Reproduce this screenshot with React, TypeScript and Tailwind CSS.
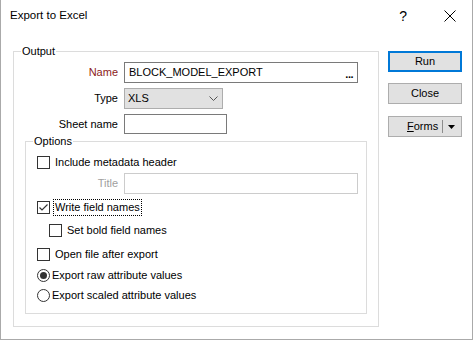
import React from "react";

function CheckBox({ checked = false }: { checked?: boolean }) {
  return (
    <span className="w-[13px] h-[13px] border border-[#333333] bg-white flex items-center justify-center shrink-0">
      {checked && (
        <svg width="11" height="11" viewBox="0 0 11 11">
          <path d="M1.5 5.5 L4 8 L9.5 2.5" fill="none" stroke="#333333" strokeWidth="1.2" />
        </svg>
      )}
    </span>
  );
}

function Radio({ checked = false }: { checked?: boolean }) {
  return (
    <span className="w-[13px] h-[13px] rounded-full border border-[#333333] bg-white flex items-center justify-center shrink-0">
      {checked && <span className="w-[7px] h-[7px] rounded-full bg-[#333333]" />}
    </span>
  );
}

export default function App() {
  return (
    <div className="w-[473px] h-[340px] bg-white border-x border-b border-[#aaaaaa] font-['Liberation_Sans',Arial,sans-serif] text-[11px] leading-[15px] text-black flex flex-col">
      {/* Title bar */}
      <div className="h-[31px] flex items-center pl-[9px] shrink-0">
        <span className="text-[11.5px]">Export to Excel</span>
        <span className="ml-auto mr-[37px] text-[14px] leading-none">?</span>
        <svg width="12" height="12" viewBox="0 0 12 12" className="mr-[16px]">
          <path d="M0.5 0.5 L11.5 11.5 M11.5 0.5 L0.5 11.5" stroke="#000" strokeWidth="1" />
        </svg>
      </div>

      {/* Body */}
      <div className="flex pt-[20px] pl-[12px]">
        {/* Output group */}
        <div className="relative w-[366px] h-[276px] border border-[#dcdcdc] pt-[10px] flex flex-col">
          <span className="absolute left-[7px] top-[-8px] bg-white px-[1px]">Output</span>

          <div className="flex items-center h-[21px]">
            <span className="w-[104px] text-right text-[#8b1a1a]">Name</span>
            <div className="ml-[6px] w-[234px] h-[21px] border border-[#7a7a7a] flex items-center pl-[4px] pr-[4px]">
              <span>BLOCK_MODEL_EXPORT</span>
              <span className="ml-auto font-bold tracking-[-0.5px] leading-[10px] self-end mb-[3px]">...</span>
            </div>
          </div>

          <div className="flex items-center h-[21px] mt-[5px]">
            <span className="w-[104px] text-right">Type</span>
            <div className="ml-[6px] w-[99px] h-[21px] border border-[#adadad] bg-[#e1e1e1] flex items-center pl-[3px] pr-[4px]">
              <span>XLS</span>
              <svg width="9" height="6" viewBox="0 0 9 6" className="ml-auto">
                <path d="M0.5 0.5 L4.5 4.5 L8.5 0.5" fill="none" stroke="#555" strokeWidth="1" />
              </svg>
            </div>
          </div>

          <div className="flex items-center h-[20px] mt-[5px]">
            <span className="w-[104px] text-right">Sheet name</span>
            <div className="ml-[6px] w-[103px] h-[20px] border border-[#7a7a7a] bg-white" />
          </div>

          {/* Options group */}
          <div className="relative ml-[11px] mt-[7px] w-[342px] h-[173px] border border-[#dcdcdc] pl-[11px] pt-[11px] flex flex-col">
            <span className="absolute left-[7px] top-[-8px] bg-white px-[1px]">Options</span>

            <div className="flex items-center h-[18px]">
              <CheckBox />
              <span className="ml-[5px]">Include metadata header</span>
            </div>

            <div className="flex items-center h-[21px] mt-[2px]">
              <span className="w-[81px] text-right text-[#a0a0a0]">Title</span>
              <div className="ml-[6px] w-[234px] h-[21px] border border-[#cccccc] bg-white" />
            </div>

            <div className="flex items-center h-[18px] mt-[4px]">
              <CheckBox checked />
              <span className="ml-[3px] px-[1px] border border-dotted border-black leading-[15px]">Write field names</span>
            </div>

            <div className="flex items-center h-[18px] mt-[5px] ml-[12px]">
              <CheckBox />
              <span className="ml-[5px]">Set bold field names</span>
            </div>

            <div className="flex items-center h-[18px] mt-[6px]">
              <CheckBox />
              <span className="ml-[5px]">Open file after export</span>
            </div>

            <div className="flex items-center h-[18px] mt-[3px]">
              <Radio checked />
              <span className="ml-[2px]">Export raw attribute values</span>
            </div>

            <div className="flex items-center h-[18px] mt-[2px]">
              <Radio />
              <span className="ml-[2px]">Export scaled attribute values</span>
            </div>
          </div>
        </div>

        {/* Buttons */}
        <div className="ml-[9px] w-[74px] flex flex-col">
          <div className="h-[21px] border-2 border-[#0078d7] bg-[#e1e1e1] flex items-center justify-center">Run</div>
          <div className="h-[21px] mt-[11px] border border-[#adadad] bg-[#e1e1e1] flex items-center justify-center">Close</div>
          <div className="h-[21px] mt-[12px] border border-[#adadad] bg-[#e1e1e1] flex items-center">
            <span className="ml-[18px]"><span className="underline">F</span>orms</span>
            <span className="ml-auto w-px h-[13px] bg-[#8c8c8c]" />
            <svg width="7" height="4" viewBox="0 0 7 4" className="ml-[5px] mr-[6px]">
              <path d="M0 0 L7 0 L3.5 4 Z" fill="#000" />
            </svg>
          </div>
        </div>
      </div>
    </div>
  );
}
